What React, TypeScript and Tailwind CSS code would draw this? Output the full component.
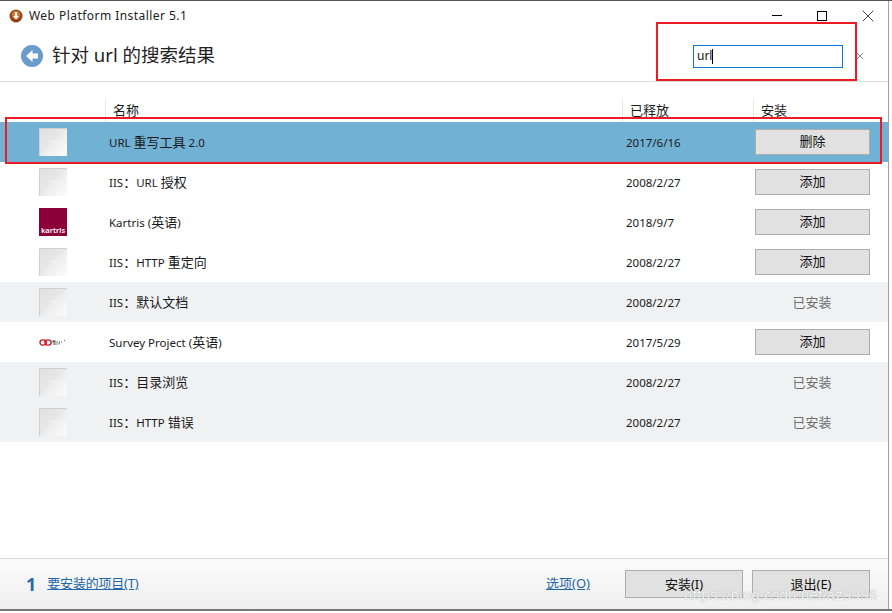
import type { ReactNode } from "react";
import { X } from "lucide-react";

const font = { fontFamily: '"Noto Sans", "Noto Sans CJK SC", sans-serif' };

// the reference sets CJK a size above the latin text
const Cjk = ({ children }: { children: string }) => <span className="text-[13px]">{children}</span>;

type Row = {
  id: string;
  name: ReactNode;
  date: string;
  action: string;
  icon?: "kartris" | "survey";
  bg?: string;
};

const rows: Row[] = [
  { id: "rewrite", name: <>URL <Cjk>重写工具</Cjk> 2.0</>, date: "2017/6/16", action: "删除", bg: "bg-[#71b1d3]" },
  { id: "auth", name: <>IIS<Cjk>：</Cjk>URL <Cjk>授权</Cjk></>, date: "2008/2/27", action: "添加" },
  { id: "kartris", name: <>Kartris (<Cjk>英语</Cjk>)</>, date: "2018/9/7", action: "添加", icon: "kartris" },
  { id: "redirect", name: <>IIS<Cjk>：</Cjk>HTTP <Cjk>重定向</Cjk></>, date: "2008/2/27", action: "添加" },
  { id: "default", name: <>IIS<Cjk>：默认文档</Cjk></>, date: "2008/2/27", action: "已安装", bg: "bg-[#eff1f3]" },
  { id: "survey", name: <>Survey Project (<Cjk>英语</Cjk>)</>, date: "2017/5/29", action: "添加", icon: "survey" },
  { id: "browse", name: <>IIS<Cjk>：目录浏览</Cjk></>, date: "2008/2/27", action: "已安装", bg: "bg-[#eff1f3]" },
  { id: "errors", name: <>IIS<Cjk>：</Cjk>HTTP <Cjk>错误</Cjk></>, date: "2008/2/27", action: "已安装", bg: "bg-[#eff1f3]" },
];

const PlaceholderIcon = () => (
  <svg width="28" height="28" viewBox="0 0 28 28">
    <defs>
      <linearGradient id="ph" x1="0" y1="0" x2="1" y2="1">
        <stop offset="0" stopColor="#e0e0e0" />
        <stop offset="0.5" stopColor="#e8e8e8" />
        <stop offset="0.5" stopColor="#ececec" />
        <stop offset="1" stopColor="#fcfcfc" />
      </linearGradient>
    </defs>
    <rect width="28" height="28" fill="url(#ph)" />
    <path d="M0.5 28V0.5H28" fill="none" stroke="#d0d0d0" />
    <path d="M11 14h1.5M13.5 14H15M16 14h1.5" stroke="#fafafa" strokeWidth="1" />
  </svg>
);

const KartrisIcon = () => (
  <div className="w-7 h-7 bg-[#8c0039] flex items-end justify-center pb-px">
    <span className="text-[7.5px] leading-[10px] font-semibold text-white">kartris</span>
  </div>
);

const SurveyIcon = () => (
  <svg width="28" height="28" viewBox="0 0 28 28">
    <ellipse cx="4.2" cy="14.5" rx="3.2" ry="2.6" fill="none" stroke="#cc1f26" strokeWidth="1.4" />
    <ellipse cx="9" cy="14.5" rx="3.2" ry="2.6" fill="none" stroke="#cc1f26" strokeWidth="1.4" />
    <path d="M13.5 12.5h3v2h-3zM17.5 13.5h1.5v1h-1.5zM20 13.5h1v1h-1zM22 13.5h1v1h-1zM14 15.5h4v1h-4zM19 15.5h2v.8h-2z" fill="#444" />
    <path d="M25 12h1v1h-1z" fill="#666" />
  </svg>
);

const FlatButton = ({ children, className }: { children: string; className: string }) => (
  <div className={`flex items-center justify-center bg-[#e1e1e1] border border-[#adadad] text-[#111] text-[13px] leading-none ${className}`}>
    {children}
  </div>
);

const App = () => {
  return (
    <div className="relative w-[892px] h-[613px] bg-white overflow-hidden text-[#1a1a1a]" style={font}>
      <div className="h-px bg-[#555]" />
      {/* Window */}
      <div className="flex flex-col h-[608px] border-r border-[#a0a0a0] mr-[3px]">
        {/* Title bar */}
        <div className="h-[29px] flex items-center pl-[9px] shrink-0">
          <svg width="14" height="14" viewBox="0 0 14 14">
            <circle cx="7" cy="7" r="6.5" fill="#8a3f16" />
            <circle cx="7" cy="6" r="4.5" fill="#c9702c" />
            <path d="M5.8 3h2.4v4h1.6L7 10.5 4.2 7h1.6z" fill="#fff" />
          </svg>
          <span className="ml-[6px] text-xs leading-none tracking-[0.45px] text-[#222]">Web Platform Installer 5.1</span>
          <div className="ml-auto flex items-center">
            <div className="w-[10px] h-px bg-black mr-[35px]" />
            <div className="w-[10px] h-[10px] border border-black mr-[31px]" />
            <X size={20} strokeWidth={0.9} className="text-black mr-[10px]" />
          </div>
        </div>

        {/* Search header */}
        <div className="h-[52px] flex items-center pl-[21px] border-b border-[#dcdcdc] shrink-0">
          <svg width="22" height="22" viewBox="0 0 22 22">
            <circle cx="11" cy="11" r="11" fill="#6a9bcb" />
            <path d="M11.5 5v3.5H17v5h-5.5V17L5 11z" fill="#fff" />
          </svg>
          <span className="ml-[9px] text-[18.5px] leading-none text-[#222]">针对 url 的搜索结果</span>
          <div className="ml-auto flex items-center mt-[1px]">
            <div className="w-[150px] h-[23px] border border-[#0f78d4] flex items-center pl-[3px] text-xs text-[#111]">
              url<span className="w-px h-[15px] bg-black" />
            </div>
            <X size={12} strokeWidth={1.4} className="ml-[11px] mr-[22px] text-[#3f6290]" />
          </div>
        </div>

        {/* Column headers */}
        <div className="h-10 flex items-start pt-[18px] text-[13px] leading-none shrink-0">
          <div className="w-[105px] h-full" />
          <div className="w-[517px] h-[22px] border-l border-[#e5e5e5] pl-[7px] pt-[4px]">名称</div>
          <div className="w-[131px] h-[22px] border-l border-[#e5e5e5] pl-[7px] pt-[4px]">已释放</div>
          <div className="flex-1 h-[22px] border-l border-[#e5e5e5] pl-[7px] pt-[4px]">安装</div>
        </div>

        {/* Product rows */}
        <div className="flex flex-col">
          {rows.map((row) => (
            <div key={row.id} className={`h-10 flex items-center text-[11.5px] ${row.bg ?? ""}`}>
              <div className="w-[109px] pl-[39px] flex items-center shrink-0">
                {row.icon === "kartris" ? <KartrisIcon /> : row.icon === "survey" ? <SurveyIcon /> : <PlaceholderIcon />}
              </div>
              <div className="w-[517px] pt-[2px] shrink-0">{row.name}</div>
              <div className="w-[129px] pt-[2px] shrink-0">{row.date}</div>
              {row.action === "已安装" ? (
                <div className="w-[114px] pt-[2px] text-center text-[13px] text-[#6d6d6d]">{row.action}</div>
              ) : (
                <FlatButton className="w-[115px] h-[26px] pb-[2px]">{row.action}</FlatButton>
              )}
            </div>
          ))}
        </div>

        {/* Footer */}
        <div className="mt-auto h-[51px] border-t border-[#dcdcdc] bg-gradient-to-b from-[#fbfbfb] to-[#efefef] flex items-center text-[13px] shrink-0">
          <span className="ml-[26px] text-lg leading-none font-bold text-[#2a6aa8]">1</span>
          <span className="ml-[11px] underline tracking-[-0.2px] text-[#1e66a8]">要安装的项目(T)</span>
          <span className="ml-auto underline text-[#1e66a8]">选项(O)</span>
          <FlatButton className="ml-[35px] w-[118px] h-[28px]">安装(I)</FlatButton>
          <FlatButton className="ml-[9px] mr-[18px] w-[118px] h-[28px]">退出(E)</FlatButton>
        </div>
      </div>
      <div className="h-[2px] bg-[#777]" />

      {/* Red annotation boxes */}
      <div className="absolute left-[656px] top-[22px] w-[201px] h-[59px] border-2 border-[#ed1c24]" />
      <div className="absolute left-[5px] top-[117px] w-[877px] h-[47px] border-2 border-[#ed1c24]" />

      {/* Watermark */}
      <span
        className="absolute left-[684px] top-[587px] text-[15px] leading-none tracking-[0.2px] text-white/90 [text-shadow:0_0_1px_#8a8a8a]"
        style={{ fontFamily: '"Liberation Sans", sans-serif' }}
      >
        https://blog.csdn.net/az9996
      </span>
    </div>
  );
};

export default App;
